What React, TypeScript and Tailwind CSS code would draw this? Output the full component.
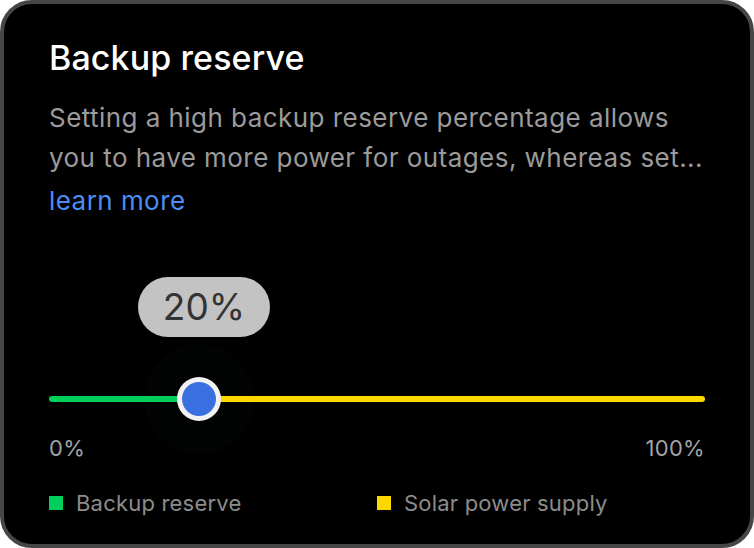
export default function App() {
  const percent = 20

  return (
    <div className="w-[754px] h-[548px] bg-white" style={{ fontFamily: 'Inter, "Noto Sans", sans-serif' }}>
      <div className="h-full rounded-[32px] border-4 border-[#464646] bg-black px-[45px] pt-[33px]">
        {/* Header */}
        <h1 className="text-[34px] leading-[42px] font-medium tracking-[0.1px] text-white">Backup reserve</h1>
        <p className="mt-[19px] text-[26px] leading-[40px] tracking-[0.45px] text-[#9b9b9b] whitespace-nowrap">
          Setting a high backup reserve percentage allows
          <br />
          you to have more power for outages, whereas set...
        </p>
        <a className="mt-[3px] block text-[26px] leading-[40px] tracking-[0.45px] text-[#4c8ef6]">learn more</a>

        {/* Value bubble */}
        <div className="mt-[56px] ml-[89px] flex h-[60px] w-[132px] items-center justify-center rounded-full bg-[#c3c3c3]">
          <span className="text-[37px] text-[#333333]">{percent}%</span>
        </div>

        {/* Slider */}
        <div className="relative mt-[40px] h-[44px] w-[656px]">
          <div className="absolute left-[95px] top-[-33px] h-[110px] w-[110px] rounded-full bg-[#020303]" />
          <div className="absolute left-0 right-0 top-[19px] flex h-[6px] items-center">
            <div className="h-full w-[140px] rounded-l-full bg-[#00cf5a]" />
            <div className="h-full flex-1 rounded-r-full bg-[#ffd800]" />
          </div>
          <div className="absolute left-[128px] top-0 flex h-[44px] w-[44px] items-center justify-center rounded-full bg-[#f2f2f2]">
            <div className="h-[34px] w-[34px] rounded-full bg-[#3a6fe2]" />
          </div>
        </div>

        {/* Scale */}
        <div className="mt-[13px] flex w-[656px] justify-between text-[22px] leading-[28px] tracking-[0.3px] text-[#a3a3a3]">
          <span>0%</span>
          <span>100%</span>
        </div>

        {/* Legend */}
        <div className="mt-[27px] grid w-[656px] grid-cols-2 text-[22px] leading-[28px] tracking-[0.2px] text-[#8c8c8c]">
          <div className="flex items-center gap-[13px]">
            <span className="h-[14px] w-[14px] bg-[#00cf5a]" />
            <span>Backup reserve</span>
          </div>
          <div className="flex items-center gap-[13px]">
            <span className="h-[14px] w-[14px] bg-[#ffd800]" />
            <span>Solar power supply</span>
          </div>
        </div>
      </div>
    </div>
  )
}
